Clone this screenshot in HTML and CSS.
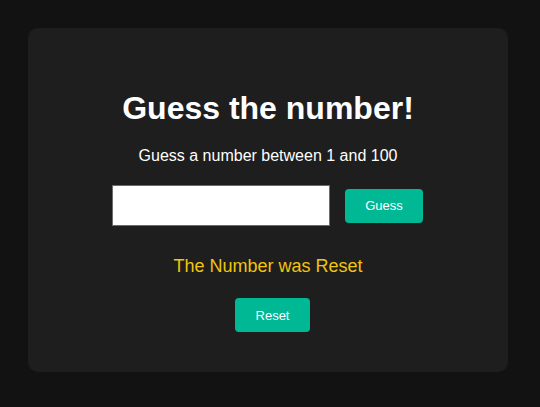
FILE: index.html
```html
<!DOCTYPE html>
<html>
<head>
<meta charset="utf-8">
<link rel="stylesheet" href="styles.css">
</head>
<body>
<div class="card">
  <h1 class="title">Guess the number!</h1>
  <p class="subtitle">Guess a number between 1 and 100</p>
  <div class="row">
    <input class="field" type="text">
    <button class="btn btn-guess">Guess</button>
  </div>
  <p class="message">The Number was Reset</p>
  <button class="btn btn-reset">Reset</button>
</div>
</body>
</html>
```
FILE: styles.css
```css
html, body {
  margin: 0;
  background: #121212;
}
body {
  padding: 28px 32px 35px 28px;
  font-family: "Liberation Sans", Arial, sans-serif;
}
.card {
  width: 480px;
  box-sizing: border-box;
  background: #1e1e1e;
  border-radius: 10px;
  padding: 40px;
  display: flex;
  flex-direction: column;
  align-items: center;
  color: #fff;
}
.title {
  margin: 22px 0 0;
  font-size: 32px;
  font-weight: bold;
  line-height: 37px;
}
.subtitle {
  margin: 20px 0 0;
  font-size: 16px;
  line-height: 18px;
}
.row {
  margin: 20px 1px 0 0;
  display: flex;
  align-items: center;
  gap: 15px;
}
.field {
  width: 218px;
  height: 41px;
  box-sizing: border-box;
  border: 1px solid #6b6b6b;
  background: #fff;
  margin: 0;
  padding: 0 8px;
}
.btn {
  height: 34px;
  padding: 0;
  border: none;
  border-radius: 4px;
  background: #00b894;
  color: #fff;
  font-family: "Liberation Sans", Arial, sans-serif;
  font-size: 13px;
}
.btn-guess {
  width: 78px;
}
.btn-reset {
  width: 75px;
  margin-left: 9px;
}
.message {
  margin: 30px 0 21px;
  font-size: 18px;
  line-height: 21px;
  color: #f1c40f;
}
```
